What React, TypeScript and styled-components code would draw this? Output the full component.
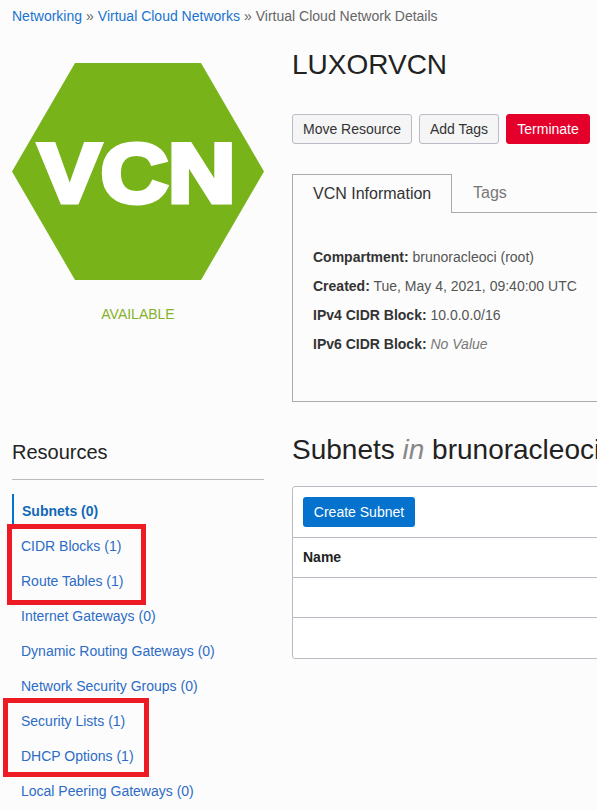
import styled, { createGlobalStyle } from "styled-components";

const GlobalStyle = createGlobalStyle`
  html, body {
    margin: 0;
    height: 100%;
    overflow: hidden;
    background: #fcfcfc;
    font-family: "Liberation Sans", Arial, sans-serif;
    font-size: 14px;
    color: #333;
  }
`;

const Page = styled.div`
  width: 597px;
  height: 810px;
  overflow: hidden;
  box-sizing: border-box;
  padding-left: 12px;
`;
const Breadcrumb = styled.div`
  height: 32px;
  line-height: 32px;
  white-space: nowrap;
  color: #666;
`;
const CrumbLink = styled.a`
  color: #1a73d0;
`;
const Separator = styled.span`
  margin: 0 4px;
`;
const Layout = styled.div`
  display: grid;
  grid-template-columns: 252px 420px;
  column-gap: 28px;
`;
const HeroColumn = styled.div`
  padding-top: 31px;
  height: 370px;
  box-sizing: border-box;
`;
const HexIcon = styled.svg`
  display: block;
  width: 252px;
  height: 217px;
`;
const Status = styled.div`
  margin-top: 26px;
  text-align: center;
  color: #84b22a;
`;
const DetailColumn = styled.div`
  height: 370px;
`;
const Title = styled.h1`
  margin: 0;
  padding-top: 15px;
  height: 36px;
  font-size: 28px;
  line-height: 36px;
  font-weight: 400;
  color: #222;
`;
const Actions = styled.div`
  display: flex;
  gap: 7px;
  margin-top: 31px;
`;
const ActionButton = styled.button<{ $danger?: boolean; $width: number }>`
  width: ${(p) => p.$width}px;
  height: 30px;
  padding: 0;
  border-radius: 3px;
  border: 1px solid ${(p) => (p.$danger ? "#e4002b" : "#b9bcc4")};
  background: ${(p) => (p.$danger ? "#e4002b" : "#f5f5f6")};
  color: ${(p) => (p.$danger ? "#fff" : "#333")};
  font-family: inherit;
  font-size: 14px;
`;
const InfoPanel = styled.div`
  margin-top: 30px;
  height: 228px;
`;
const Tabs = styled.div`
  display: flex;
  height: 39px;
  box-sizing: border-box;
`;
const ActiveTab = styled.div`
  width: 160px;
  box-sizing: border-box;
  border: 1px solid #aaa;
  border-bottom: none;
  padding-left: 20px;
  font-size: 16px;
  line-height: 38px;
  color: #333;
`;
const Tab = styled.div`
  flex: 1;
  border-bottom: 1px solid #aaa;
  padding-left: 21px;
  font-size: 16px;
  line-height: 38px;
  color: #777;
`;
const InfoBody = styled.div`
  height: 189px;
  box-sizing: border-box;
  border: 1px solid #aaa;
  border-top: none;
  padding: 30px 20px 0;
`;
const InfoRow = styled.div`
  height: 29px;
  line-height: 29px;
  color: #555;
`;
const InfoLabel = styled.b`
  color: #333;
`;
const Muted = styled.i`
  color: #777;
`;
const ResourcesColumn = styled.div`
  position: relative;
`;
const SectionTitle = styled.h2`
  margin: 0;
  padding: 35px 0 12px;
  font-size: 20px;
  line-height: 30px;
  font-weight: 400;
  color: #222;
  border-bottom: 1px solid #bbb;
`;
const ResourceNav = styled.nav`
  position: relative;
  margin-top: 14px;
`;
const NavItem = styled.a<{ $active?: boolean }>`
  display: block;
  box-sizing: border-box;
  padding-left: ${(p) => (p.$active ? 8 : 9)}px;
  color: ${(p) => (p.$active ? "#1268b8" : "#2c6cc6")};
  font-weight: ${(p) => (p.$active ? 700 : 400)};
  border-left: ${(p) => (p.$active ? "2px solid #0572ce" : "none")};
  height: ${(p) => (p.$active ? 30 : 35)}px;
  line-height: ${(p) => (p.$active ? "34px" : "35px")};
  margin-bottom: ${(p) => (p.$active ? 5 : 0)}px;
`;
const Callout = styled.div<{ $top: number; $left: number; $width: number; $height: number }>`
  position: absolute;
  top: ${(p) => p.$top}px;
  left: ${(p) => p.$left}px;
  width: ${(p) => p.$width}px;
  height: ${(p) => p.$height}px;
  box-sizing: border-box;
  border: 5px solid #ed1c24;
`;
const SubnetsColumn = styled.div``;
const SubnetsTitle = styled.h2`
  margin: 0;
  padding-top: 30px;
  height: 36px;
  font-size: 28px;
  line-height: 36px;
  font-weight: 400;
  white-space: nowrap;
  color: #222;
`;
const TitleEm = styled.i`
  color: #888;
`;
const Card = styled.div`
  margin-top: 18px;
  width: 420px;
  height: 173px;
  box-sizing: border-box;
  background: #fff;
  border: 1px solid #b9bcc4;
  border-radius: 3px;
`;
const Toolbar = styled.div`
  height: 50px;
  box-sizing: border-box;
  padding: 10px;
`;
const CreateButton = styled.button`
  width: 112px;
  height: 30px;
  padding: 0;
  border: none;
  border-radius: 3px;
  background: #0572ce;
  color: #fff;
  font-family: inherit;
  font-size: 14px;
`;
const HeaderRow = styled.div`
  height: 40px;
  box-sizing: border-box;
  border-top: 1px solid #b9bcc4;
  padding-left: 10px;
  line-height: 39px;
  font-weight: 700;
  color: #222;
`;
const EmptyRow = styled.div`
  height: 40px;
  box-sizing: border-box;
  border-top: 1px solid #b9bcc4;
`;

const resources = [
  "CIDR Blocks (1)",
  "Route Tables (1)",
  "Internet Gateways (0)",
  "Dynamic Routing Gateways (0)",
  "Network Security Groups (0)",
  "Security Lists (1)",
  "DHCP Options (1)",
  "Local Peering Gateways (0)",
];

export default function App() {
  return (
    <Page>
      <GlobalStyle />
      <Breadcrumb>
        <CrumbLink>Networking</CrumbLink>
        <Separator>»</Separator>
        <CrumbLink>Virtual Cloud Networks</CrumbLink>
        <Separator>»</Separator>
        Virtual Cloud Network Details
      </Breadcrumb>
      <Layout>
        <HeroColumn>
          <HexIcon viewBox="0 0 252 217">
            <polygon points="63,0 189,0 252,108.5 189,217 63,217 0,108.5" fill="#78b31a" />
            <text
              x="125"
              y="138.5"
              textAnchor="middle"
              textLength="197"
              lengthAdjust="spacingAndGlyphs"
              fontFamily="Liberation Sans"
              fontWeight="700"
              fontSize="84"
              fill="#fff"
              stroke="#fff"
              strokeWidth="5"
              strokeLinejoin="miter"
            >
              VCN
            </text>
          </HexIcon>
          <Status>AVAILABLE</Status>
        </HeroColumn>
        <DetailColumn>
          <Title>LUXORVCN</Title>
          <Actions>
            <ActionButton $width={120}>Move Resource</ActionButton>
            <ActionButton $width={80}>Add Tags</ActionButton>
            <ActionButton $width={84} $danger>
              Terminate
            </ActionButton>
          </Actions>
          <InfoPanel>
            <Tabs>
              <ActiveTab>VCN Information</ActiveTab>
              <Tab>Tags</Tab>
            </Tabs>
            <InfoBody>
              <InfoRow>
                <InfoLabel>Compartment:</InfoLabel> brunoracleoci (root)
              </InfoRow>
              <InfoRow>
                <InfoLabel>Created:</InfoLabel> Tue, May 4, 2021, 09:40:00 UTC
              </InfoRow>
              <InfoRow>
                <InfoLabel>IPv4 CIDR Block:</InfoLabel> 10.0.0.0/16
              </InfoRow>
              <InfoRow>
                <InfoLabel>IPv6 CIDR Block:</InfoLabel> <Muted>No Value</Muted>
              </InfoRow>
            </InfoBody>
          </InfoPanel>
        </DetailColumn>
        <ResourcesColumn>
          <SectionTitle>Resources</SectionTitle>
          <ResourceNav>
            <NavItem $active>Subnets (0)</NavItem>
            {resources.map((name) => (
              <NavItem key={name}>{name}</NavItem>
            ))}
            <Callout $top={30} $left={-5} $width={139} $height={81} />
            <Callout $top={204} $left={-9} $width={146} $height={79} />
          </ResourceNav>
        </ResourcesColumn>
        <SubnetsColumn>
          <SubnetsTitle>
            Subnets <TitleEm>in</TitleEm> brunoracleoci
          </SubnetsTitle>
          <Card>
            <Toolbar>
              <CreateButton>Create Subnet</CreateButton>
            </Toolbar>
            <HeaderRow>Name</HeaderRow>
            <EmptyRow />
            <EmptyRow />
          </Card>
        </SubnetsColumn>
      </Layout>
    </Page>
  );
}
